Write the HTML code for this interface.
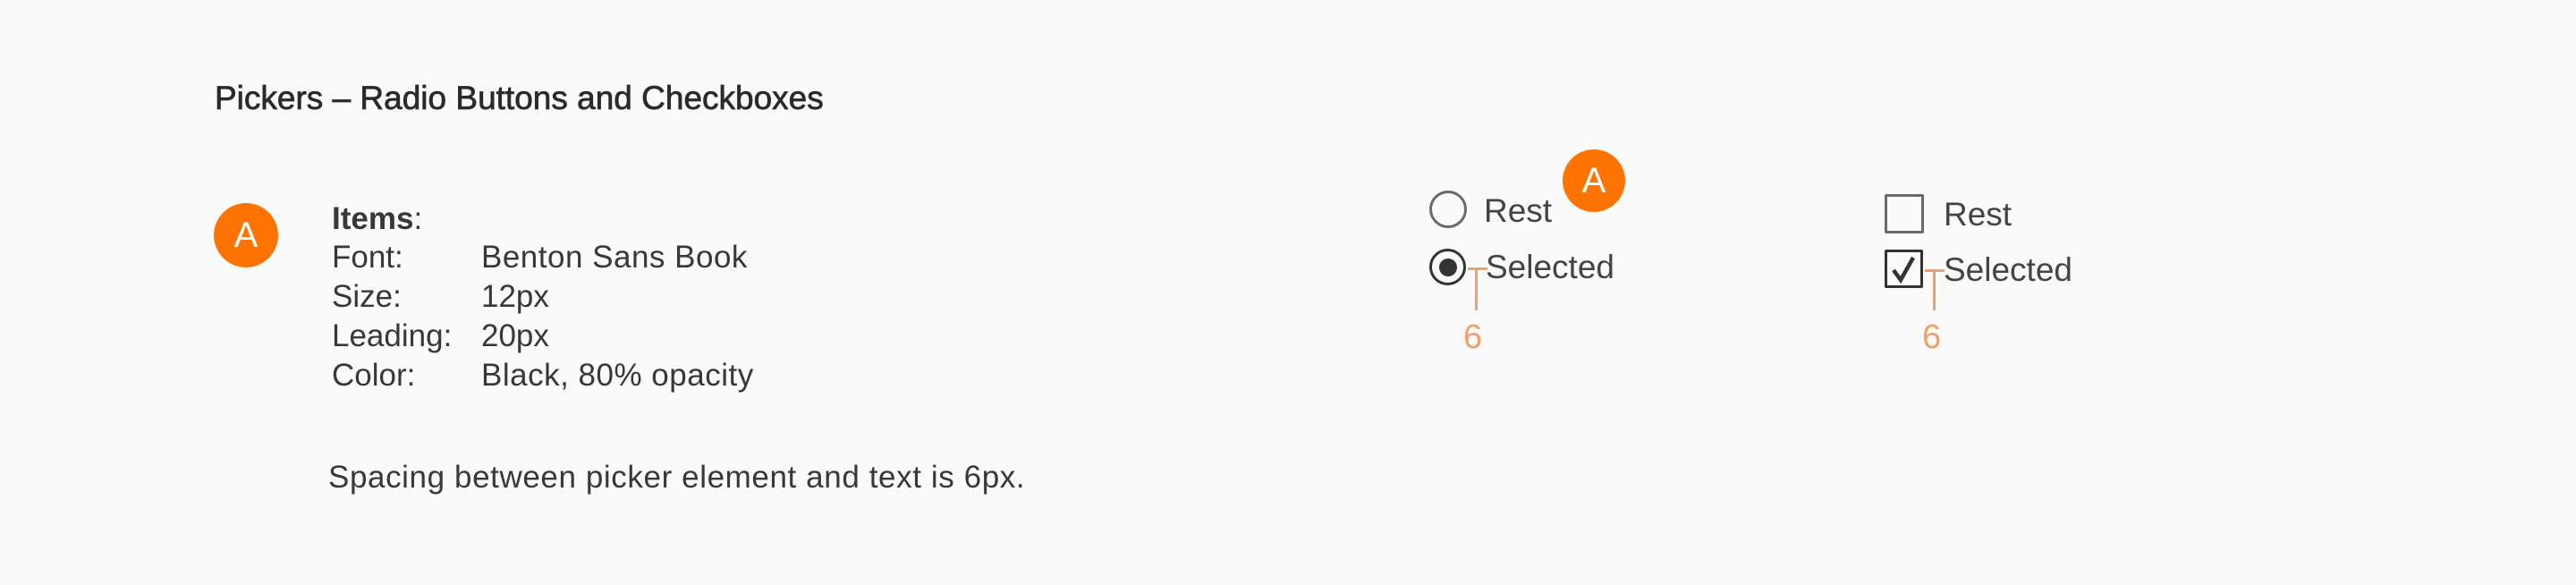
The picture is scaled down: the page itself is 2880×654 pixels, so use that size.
<!DOCTYPE html>
<html><head><meta charset="utf-8"><style>
html,body{margin:0;padding:0}
body{width:2880px;height:654px;background:#fafafa;position:relative;overflow:hidden;font-family:"Liberation Sans",sans-serif;color:#383838}
.t{position:absolute;line-height:1;white-space:nowrap}
.badge{position:absolute;border-radius:50%;background:#ff7300;color:#fff;text-align:center;font-size:40px}
.or{position:absolute;background:#f0a06a}
</style></head><body>
<div class="t" style="left:240px;top:91px;font-size:37px;color:#2a2a2a;-webkit-text-stroke:0.7px #2a2a2a">Pickers – Radio Buttons and Checkboxes</div>

<div class="badge" style="left:239px;top:227px;width:72px;height:72px;line-height:72px">A</div>
<div class="t" style="left:371px;top:227px;font-size:35px;font-weight:bold">Items<span style="font-weight:normal">:</span></div>
<div class="t" style="left:371px;top:270px;font-size:35px">Font:</div>
<div class="t" style="left:538px;top:270px;font-size:35px;letter-spacing:0.5px">Benton Sans Book</div>
<div class="t" style="left:371px;top:314px;font-size:35px">Size:</div>
<div class="t" style="left:538px;top:314px;font-size:35px">12px</div>
<div class="t" style="left:371px;top:358px;font-size:35px">Leading:</div>
<div class="t" style="left:538px;top:358px;font-size:35px">20px</div>
<div class="t" style="left:371px;top:402px;font-size:35px">Color:</div>
<div class="t" style="left:538px;top:402px;font-size:35px;letter-spacing:0.5px">Black, 80% opacity</div>
<div class="t" style="left:367px;top:516px;font-size:35px;letter-spacing:0.6px">Spacing between picker element and text is 6px.</div>

<!-- radios -->
<div style="position:absolute;left:1598px;top:213px;width:36px;height:36px;border:3px solid #6a6a6a;border-radius:50%"></div>
<div class="t" style="left:1659px;top:217px;font-size:37px;color:#444">Rest</div>
<div class="badge" style="left:1747px;top:167px;width:70px;height:70px;line-height:70px">A</div>
<div style="position:absolute;left:1598px;top:278px;width:35px;height:35px;border:3.5px solid #333;border-radius:50%"></div>
<div style="position:absolute;left:1609px;top:289px;width:20px;height:20px;background:#333;border-radius:50%"></div>
<div class="t" style="left:1661px;top:280px;font-size:37px;color:#444">Selected</div>
<div class="or" style="left:1641px;top:299px;width:22px;height:3px"></div>
<div class="or" style="left:1649px;top:300px;width:3px;height:47px"></div>
<div class="t" style="left:1636px;top:358px;font-size:38px;color:#f0a06a">6</div>

<!-- checkboxes -->
<div style="position:absolute;left:2107px;top:217px;width:38px;height:38px;border:3px solid #6a6a6a;border-radius:2px"></div>
<div class="t" style="left:2173px;top:221px;font-size:37px;color:#444">Rest</div>
<div style="position:absolute;left:2107px;top:279px;width:37px;height:37px;border:3.5px solid #333;border-radius:2px"></div>
<svg style="position:absolute;left:2107px;top:279px" width="44" height="44" viewBox="0 0 44 44"><path d="M10 23 L18 34 L32 9" fill="none" stroke="#333" stroke-width="4.5"/></svg>
<div class="t" style="left:2173px;top:283px;font-size:37px;color:#444">Selected</div>
<div class="or" style="left:2152px;top:301px;width:22px;height:3px"></div>
<div class="or" style="left:2161px;top:302px;width:3px;height:45px"></div>
<div class="t" style="left:2149px;top:358px;font-size:38px;color:#f0a06a">6</div>
</body></html>
